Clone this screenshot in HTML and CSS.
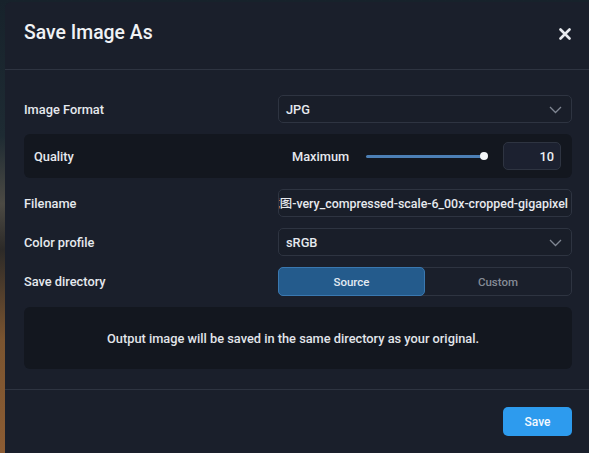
FILE: index.html
```html
<!DOCTYPE html>
<html lang="en">
<head>
<meta charset="utf-8">
<title>Save Image As</title>
<link rel="stylesheet" href="styles.css">
</head>
<body>
<div class="dialog">
  <header class="dlg-header">
    <h1 class="dlg-title">Save Image As</h1>
    <button class="close-btn" aria-label="Close">
      <svg width="12" height="12" viewBox="0 0 12 12"><path d="M1.5 1.5 L10.5 10.5 M10.5 1.5 L1.5 10.5" stroke="#e9ebef" stroke-width="2.6" stroke-linecap="round"/></svg>
    </button>
  </header>

  <section class="dlg-body">
    <div class="row">
      <span class="label">Image Format</span>
      <div class="select">
        <span>JPG</span>
        <svg class="chev" width="13" height="8" viewBox="0 0 13 8"><path d="M1 1 L6.5 6.5 L12 1" fill="none" stroke="#7f8692" stroke-width="1.3"/></svg>
      </div>
    </div>

    <div class="row quality">
      <span class="label q-label">Quality</span>
      <div class="q-controls">
        <span class="q-max">Maximum</span>
        <div class="slider"><div class="track"></div><div class="thumb"></div></div>
        <div class="numbox">10</div>
      </div>
    </div>

    <div class="row">
      <span class="label">Filename</span>
      <div class="input"><span class="input-text">截图-very_compressed-scale-6_00x-cropped-gigapixel</span></div>
    </div>

    <div class="row">
      <span class="label">Color profile</span>
      <div class="select">
        <span>sRGB</span>
        <svg class="chev" width="13" height="8" viewBox="0 0 13 8"><path d="M1 1 L6.5 6.5 L12 1" fill="none" stroke="#7f8692" stroke-width="1.3"/></svg>
      </div>
    </div>

    <div class="row">
      <span class="label">Save directory</span>
      <div class="segmented">
        <button class="seg seg-active">Source</button>
        <button class="seg">Custom</button>
      </div>
    </div>

    <div class="info">Output image will be saved in the same directory as your original.</div>
  </section>

  <footer class="dlg-footer">
    <button class="save-btn">Save</button>
  </footer>
</div>
</body>
</html>
```

FILE: styles.css
```css
html, body {
  margin: 0;
  padding: 0;
  height: 100%;
  overflow: hidden;
}
body {
  background: linear-gradient(180deg, #17222b 0%, #1e2b33 30%, #4c4a44 45%, #2c2a28 55%, #7a5430 75%, #8c5c33 100%);
  font-family: Roboto, "Noto Sans", "Noto Sans CJK SC", sans-serif;
  color: #e4e7ec;
}
.dialog {
  margin: 2px 0 0 5px;
  width: 586px;
  height: 460px;
  background: #1a1f2b;
  border-radius: 6px 0 0 0;
  box-sizing: border-box;
  display: flex;
  flex-direction: column;
}
.dlg-header {
  display: flex;
  align-items: center;
  justify-content: space-between;
  padding: 0 20px 6px 19px;
  height: 61px;
  border-bottom: 1px solid #2e3441;
}
.dlg-title {
  margin: 0;
  font-size: 19.4px;
  font-weight: 500;
  color: #f0f2f5;
}
.close-btn {
  background: none;
  border: 0;
  padding: 0;
  width: 12px;
  height: 12px;
  display: flex;
  margin-top: 2px;
}
.dlg-body {
  display: flex;
  flex-direction: column;
  gap: 11px;
  padding: 25px 19px 20px 19px;
  border-bottom: 1px solid #2e3441;
}
.row {
  display: grid;
  grid-template-columns: 254px 1fr;
  align-items: center;
}
.label {
  font-size: 12.8px;
  font-weight: 500;
  color: #e6e9ee;
}
.select, .input {
  height: 28px;
  box-sizing: border-box;
  border: 1px solid #2e3441;
  border-radius: 5px;
  background: #191e29;
  display: flex;
  align-items: center;
  justify-content: space-between;
  padding: 0 9px 0 7px;
  font-size: 12.8px;
  font-weight: 500;
  color: #e6e9ee;
}
.chev { margin-top: 1px; }
.input {
  overflow: hidden;
  justify-content: flex-end;
  padding: 0 3px 0 0;
  white-space: nowrap;
  font-size: 12.4px;
}
.input-text { flex: none; }
.quality {
  background: #13171f;
  border-radius: 6px;
  height: 44px;
  padding-right: 11px;
}
.q-label { padding-left: 10px; }
.q-controls {
  display: flex;
  align-items: center;
  padding-left: 14px;
}
.q-max {
  font-size: 12.8px;
  font-weight: 500;
  color: #e6e9ee;
  width: 74px;
}
.slider {
  position: relative;
  width: 122px;
  height: 10px;
  display: flex;
  align-items: center;
}
.track {
  width: 118px;
  height: 3px;
  background: #4c7fb5;
  border-radius: 2px;
}
.thumb {
  position: absolute;
  left: 114px;
  top: 1px;
  width: 8px;
  height: 8px;
  border-radius: 50%;
  background: #f4f6f8;
}
.numbox {
  margin-left: 15px;
  width: 58px;
  height: 28px;
  box-sizing: border-box;
  border: 1px solid #2e3441;
  border-radius: 5px;
  background: #1c2130;
  display: flex;
  align-items: center;
  justify-content: flex-end;
  padding-right: 6px;
  font-size: 12.8px;
  font-weight: 500;
  color: #eef0f3;
}
.segmented {
  height: 29px;
  box-sizing: border-box;
  border: 1px solid #2e3441;
  border-radius: 5px;
  display: grid;
  grid-template-columns: 146px 1fr;
}
.seg {
  background: none;
  border: 0;
  font-family: inherit;
  font-size: 11.5px;
  font-weight: 500;
  color: #858b96;
  padding: 0;
}
.seg-active {
  margin: -1px 0 -1px -1px;
  background: #245b8c;
  border: 1px solid #3a78b0;
  border-radius: 5px;
  color: #e3ebf3;
}
.info {
  height: 62px;
  background: #13171f;
  border-radius: 6px;
  display: flex;
  align-items: center;
  justify-content: center;
  font-size: 12.8px;
  font-weight: 500;
  color: #e2e5ea;
  padding-right: 10px;
}
.dlg-footer {
  display: flex;
  justify-content: flex-end;
  padding: 17px 19px 0 19px;
}
.save-btn {
  width: 69px;
  height: 29px;
  background: #2d9bee;
  border: 0;
  border-radius: 5px;
  color: #f4f9ff;
  font-family: inherit;
  font-size: 12px;
  font-weight: 500;
}
```
